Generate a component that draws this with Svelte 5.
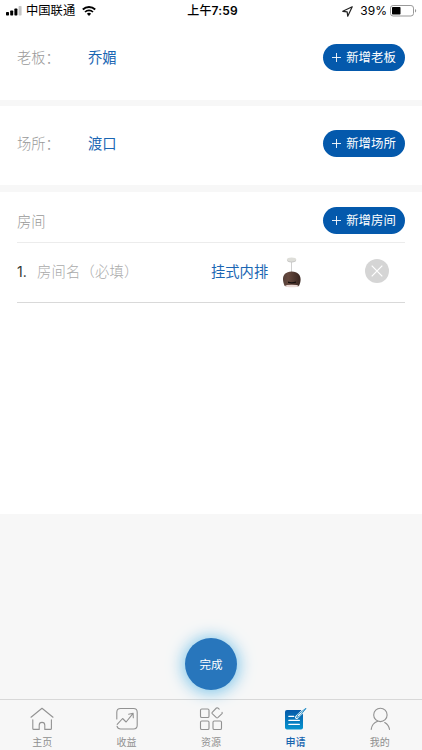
<script>
  const people = [
    { label: '老板：', value: '乔媚', action: '新增老板' },
    { label: '场所：', value: '渡口', action: '新增场所' }
  ];

  let rooms = [{ id: 1, name: '', device: '挂式内排' }];
  let current = 'apply';

  const tabs = [
    { id: 'home', title: '主页' },
    { id: 'income', title: '收益' },
    { id: 'resource', title: '资源' },
    { id: 'apply', title: '申请' },
    { id: 'mine', title: '我的' }
  ];

  function removeRoom(room) {
    rooms = rooms.filter((r) => r.id !== room.id);
  }

  function addRoom() {
    rooms = [...rooms, { id: Date.now(), name: '', device: '挂式内排' }];
  }
</script>

<style>
  :global(body) {
    background: #f7f7f7;
  }

  .screen {
    position: relative;
    display: flex;
    flex-direction: column;
    width: 422px;
    height: 750px;
    overflow: hidden;
    background: #f7f7f7;
    color: #333;
    font-family: "Liberation Sans", "Noto Sans CJK SC", sans-serif;
  }

  button,
  input {
    padding: 0;
    border: none;
    background: none;
    font-family: inherit;
  }

  svg {
    display: block;
    flex: none;
  }

  .status {
    display: grid;
    grid-template-columns: 1fr auto 1fr;
    align-items: center;
    height: 22px;
    padding: 0 5px 0 6px;
    background: #fff;
    color: #000;
    font-family: Inter, "Noto Sans CJK SC", sans-serif;
    font-size: 12px;
    line-height: 22px;
  }

  .status div {
    display: flex;
    align-items: center;
  }

  .carrier {
    margin: 0 7px 0 4px;
    font-size: 12.3px;
  }

  .status .clock {
    padding-left: 2px;
    font-weight: 600;
    letter-spacing: 0.15px;
  }

  .clock span {
    font-weight: 500;
  }

  .status .right {
    justify-content: flex-end;
  }

  .percent {
    margin: 0 3px 0 7px;
    font-size: 12px;
  }

  .row {
    display: flex;
    align-items: center;
    box-sizing: border-box;
    padding: 0 17px;
    background: #fff;
    font-size: 14.3px;
  }

  .person {
    height: 86px;
    padding-bottom: 5px;
    border-bottom: 7px solid #f7f7f7;
  }

  .person:first-child {
    height: 84px;
    padding-bottom: 7px;
    border-bottom-width: 6px;
  }

  .label {
    width: 71px;
    padding-bottom: 2px;
    color: #999;
    font-weight: 300;
  }

  .value {
    padding-bottom: 2px;
    color: #1a66b3;
  }

  .add {
    display: flex;
    align-items: center;
    justify-content: center;
    gap: 5px;
    width: 82px;
    height: 27px;
    margin-left: auto;
    border-radius: 14px;
    background: #0459ac;
    color: #fff;
    font-size: 12.4px;
    white-space: nowrap;
  }

  .add span {
    padding-top: 1px;
    line-height: 26px;
  }

  .rooms {
    height: 322px;
    background: #fff;
  }

  .heading {
    height: 51px;
    margin: 0 17px;
    padding: 6px 0 0;
    border-bottom: 1px solid #ececec;
  }

  .heading .label {
    padding-bottom: 0;
  }

  .room {
    height: 60px;
    margin: 0 17px;
    padding: 0 16px 3px 0;
    border-bottom: 1px solid #d9d9d9;
  }

  .index {
    width: 20px;
    font-family: Inter, sans-serif;
    font-size: 14px;
  }

  .room input {
    width: 174px;
    padding-top: 2px;
    color: #333;
    font-size: 14.3px;
    font-weight: 300;
    letter-spacing: 0.2px;
    outline: none;
  }

  .room input::placeholder {
    color: #aaa;
    opacity: 1;
  }

  .lamp {
    margin: 2px 0 0 14px;
  }

  .remove {
    margin-left: auto;
  }

  .done {
    position: absolute;
    left: 185px;
    top: 638px;
    width: 52px;
    height: 52px;
    border-radius: 50%;
    background: #2876bc;
    box-shadow: 0 1px 16px 2px #7cc5ea;
    color: #fff;
    font-size: 11.5px;
  }

  .tabs {
    display: flex;
    box-sizing: border-box;
    height: 51px;
    margin-top: auto;
    border-top: 1px solid #d8d8d8;
  }

  .tab {
    display: flex;
    flex: 1;
    flex-direction: column;
    align-items: center;
    padding-top: 6px;
    color: #8f8f8f;
    font-size: 10px;
    line-height: 15px;
  }

  .tab svg {
    margin-bottom: 3px;
  }

  .tab.active {
    color: #1764ae;
    font-weight: 500;
  }
</style>

<div class="screen">
  <header class="status">
    <div>
      <svg width="16" height="10" viewBox="0 0 16 10">
        <rect x="0" y="6" width="3" height="3.5" rx=".7" />
        <rect x="4.2" y="4.5" width="3" height="5" rx=".7" />
        <rect x="8.4" y="2.5" width="3" height="7" rx=".7" />
        <rect x="12.6" y="0" width="3" height="9.5" rx=".7" fill="#c4c4c4" />
      </svg>
      <span class="carrier">中国联通</span>
      <svg width="14" height="10" viewBox="0 0 14 10">
        <path d="M.8 3.5a9 9 0 0 1 12.4 0" fill="none" stroke="#000" stroke-width="1.9" />
        <path d="M3 6a5.8 5.8 0 0 1 8 0" fill="none" stroke="#000" stroke-width="1.7" />
        <path d="M4.9 7.7a3 3 0 0 1 4.2 0L7 10z" />
      </svg>
    </div>
    <div class="clock"><span>上午</span>7:59</div>
    <div class="right">
      <svg width="11" height="11" viewBox="0 0 10 10" fill="none" stroke="#222" stroke-width="1.1" stroke-linejoin="round">
        <path d="M9.3.7.7 4.8l4 .5.5 4z" />
      </svg>
      <span class="percent">39%</span>
      <svg width="27" height="12" viewBox="0 0 27 12">
        <rect x=".5" y=".5" width="23" height="10.5" rx="2.6" fill="none" stroke="#999" />
        <rect x="2" y="2" width="8.5" height="7.5" rx=".7" />
        <path d="M25 4c1.6.5 1.6 3 0 3.5z" fill="#999" />
      </svg>
    </div>
  </header>

  <main>
    {#each people as person}
      <section class="row person">
        <span class="label">{person.label}</span>
        <span class="value">{person.value}</span>
        <button class="add">
          <svg width="9" height="9" viewBox="0 0 9 9" stroke="#fff" stroke-width=".9">
            <path d="M4.5 0v9M0 4.5h9" />
          </svg>
          <span>{person.action}</span>
        </button>
      </section>
    {/each}

    <section class="rooms">
      <div class="row heading">
        <span class="label">房间</span>
        <button class="add" on:click={addRoom}>
          <svg width="9" height="9" viewBox="0 0 9 9" stroke="#fff" stroke-width=".9">
            <path d="M4.5 0v9M0 4.5h9" />
          </svg>
          <span>新增房间</span>
        </button>
      </div>
      {#each rooms as room, i (room.id)}
        <div class="row room">
          <span class="index">{i + 1}.</span>
          <input placeholder="房间名（必填）" bind:value={room.name} />
          <span class="value">{room.device}</span>
          <svg class="lamp" width="20" height="31" viewBox="0 0 20 31">
            <defs>
              <linearGradient id="shade">
                <stop offset="0" stop-color="#554039" />
                <stop offset=".3" stop-color="#65483d" />
                <stop offset="1" stop-color="#38251f" />
              </linearGradient>
            </defs>
            <path d="M9.5 4v11" stroke="#d0d0d0" />
            <ellipse cx="9.6" cy="2.8" rx="4.7" ry="2.4" fill="#deded9" />
            <path d="M5.2 3.5c1.5 2 7 2 8.8 0" fill="none" stroke="#bbb" stroke-width=".7" />
            <path d="M2.7 29C-.6 22 .4 14.8 9.7 14.5c9.3.3 10.5 7.5 7.3 14.5-4 1.4-10 1.4-14.3 0z" fill="url(#shade)" />
            <path d="M6 24.6q4 1.2 8-.1v1.3q-4 1.1-8 .1z" fill="#160e0c" />
            <ellipse cx="9.9" cy="29" rx="6.7" ry="1.3" fill="#ead9d5" />
          </svg>
          <button class="remove" aria-label="删除" on:click={() => removeRoom(room)}>
            <svg width="24" height="24" viewBox="0 0 24 24">
              <circle cx="12" cy="12" r="12" fill="#d5d5d5" />
              <path d="M6.7 6.7l10.6 10.6M17.3 6.7L6.7 17.3" stroke="#fff" stroke-width="1.2" />
            </svg>
          </button>
        </div>
      {/each}
    </section>
  </main>

  <button class="done">完成</button>

  <nav class="tabs">
    {#each tabs as tab}
      <button class="tab" class:active={current === tab.id} on:click={() => (current = tab.id)}>
        <svg width="26" height="26" viewBox="0 0 26 26" fill="none" stroke="#929292" stroke-width="1.1" stroke-linecap="round" stroke-linejoin="round">
          {#if tab.id === 'home'}
            <path d="M2 11.2 13 2.3l11 8.9" />
            <path d="M3.8 13.7v8.7q0 1 1 1h5.4v-4.2a2.8 2.8 0 0 1 5.6 0v4.2h5.6q1 0 1-1v-8.7" />
          {:else if tab.id === 'income'}
            <path d="M2.8 13V6.2q0-3.7 3.7-3.7h13q3.7 0 3.7 3.7v13.1q0 3.7-3.7 3.7h-13q-2.8 0-3.5-2.8" />
            <path d="M3.2 18.4 8.6 12.5l3.5 3.5 6.6-8.2M14.6 8.2l4.5-1 .2 4.6" />
          {:else if tab.id === 'resource'}
            <rect x="2.5" y="3" width="8.5" height="8.5" rx="1.3" />
            <rect x="2.5" y="15" width="8.5" height="8.5" rx="1.3" />
            <rect x="15" y="15" width="8.5" height="8.5" rx="1.3" />
            <path d="M21.2 3.2 19.8 2q-.7-.6-1.4 0l-4.2 4.3q-.6.7 0 1.4l4.2 4q.7.6 1.4 0l4.2-4q.6-.7 0-1.4" />
          {:else if tab.id === 'apply'}
            <defs>
              <linearGradient id="page" x1="0" y1="0" x2="0" y2="1">
                <stop offset="0" stop-color="#0559a8" />
                <stop offset="1" stop-color="#0794cf" />
              </linearGradient>
            </defs>
            <path d="M5 4h14l2 2v15.5q0 2-2 2H5q-2 0-2-2V6q0-2 2-2z" fill="url(#page)" stroke="none" />
            <path d="M6.8 10.4h5M6.8 14.4h10.6M6.8 18.4h10.6" stroke="#fff" />
            <path d="M14.7 11.3 23.5 2.8" stroke="#f7f7f7" stroke-width="3.4" />
            <path d="M14.7 11.3l1.1-2.6 7.8-6.2M14.7 11.3l2.4-.7 6.7-7.8" stroke="#1686c4" stroke-width=".9" />
          {:else}
            <circle cx="13.4" cy="8.9" r="6.7" />
            <path d="M10.7 15.2c-3.7 1.2-6 4-6.5 8.2M17.7 16.5c2.7 1.5 4.3 3.8 4.8 6.9" />
          {/if}
        </svg>
        <span>{tab.title}</span>
      </button>
    {/each}
  </nav>
</div>
